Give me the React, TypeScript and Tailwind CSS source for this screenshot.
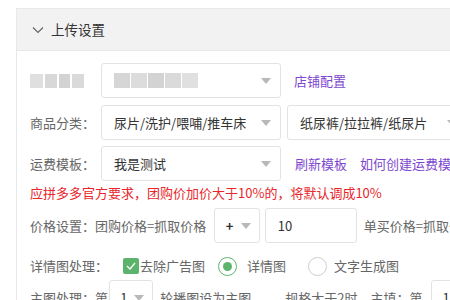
import React from "react";

const font = { fontFamily: '"Noto Sans CJK SC", "Noto Sans", sans-serif' };

const Arrow = () => (
  <svg width="10" height="6" viewBox="0 0 10 6" className="shrink-0">
    <path d="M0 0 L10 0 L5 6 Z" fill="#b8b8b8" />
  </svg>
);

const Select = ({ w, children }: { w: string; children?: React.ReactNode }) => (
  <div
    className={`${w} h-[35px] shrink-0 border border-[#e3e3e3] rounded-[3px] flex items-center justify-between pl-[12px] pr-[9px] text-[#333]`}
  >
    <div className="flex items-center">{children}</div>
    <Arrow />
  </div>
);

const App = () => {
  return (
    <div className="w-[450px] h-[300px] bg-white overflow-hidden text-[13px] whitespace-nowrap" style={font}>
      <div className="ml-[16px] mt-[8px] w-[460px] border border-[#e8e8e8]">
        <div className="h-[42px] bg-[#f2f2f2] border-b border-[#e8e8e8] flex items-center pl-[15px] text-[13.5px] text-[#333]">
          <svg width="12" height="8" viewBox="0 0 12 8" className="mr-[7px]">
            <path d="M1 1.5 L6 6.5 L11 1.5" stroke="#666" strokeWidth="1.2" fill="none" />
          </svg>
          上传设置
        </div>

        <div className="pl-[13px] pt-[12px] text-[#666]">
          <div className="flex items-center h-[35px]">
            <div className="w-[71px] flex items-center">
              <div className="w-[54px] h-[14px] flex gap-[2px] opacity-80">
                <div className="w-[14px] bg-[#d8d8d8]" />
                <div className="w-[12px] bg-[#cfcfcf]" />
                <div className="w-[12px] bg-[#c9c9c9]" />
                <div className="w-[12px] bg-[#d2d2d2]" />
              </div>
            </div>
            <Select w="w-[180px]">
              <div className="w-[84px] h-[15px] flex gap-[1px]">
                <div className="flex-1 bg-[#d6d6d6]" />
                <div className="flex-1 bg-[#dcdcdc]" />
                <div className="flex-1 bg-[#d3d3d3]" />
                <div className="flex-1 bg-[#dadada]" />
                <div className="flex-1 bg-[#e0e0e0]" />
              </div>
            </Select>
            <span className="ml-[13px] text-[#7d47cf]">店铺配置</span>
          </div>

          <div className="flex items-center h-[35px] mt-[7px]">
            <span className="w-[71px]">商品分类：</span>
            <Select w="w-[180px]">尿片/洗护/喂哺/推车床</Select>
            <div className="ml-[6px]">
              <Select w="w-[180px]">纸尿裤/拉拉裤/纸尿片</Select>
            </div>
          </div>

          <div className="flex items-center h-[35px] mt-[6px]">
            <span className="w-[71px]">运费模板：</span>
            <Select w="w-[180px]">我是测试</Select>
            <span className="ml-[14px] text-[#7d47cf]">刷新模板</span>
            <span className="ml-[13px] text-[#7d47cf]">如何创建运费模板</span>
          </div>

          <div className="mt-[2px] h-[20px] flex items-center text-[#e8262c]">
            应拼多多官方要求，团购价加价大于10%的，将默认调成10%
          </div>

          <div className="flex items-center h-[35px] mt-[5px]">
            <span className="w-[184px]">价格设置：团购价格=抓取价格</span>
            <div className="w-[46px] h-[35px] border border-[#e3e3e3] rounded-[3px] flex items-center justify-between pl-[11px] pr-[8px] text-[#333] font-bold">
              +
              <Arrow />
            </div>
            <div className="ml-[5px] w-[92px] h-[35px] border border-[#e3e3e3] rounded-[3px] flex items-center pl-[12px] text-[#333]">
              10
            </div>
            <span className="ml-[7px]">单买价格=抓取价格</span>
          </div>

          <div className="flex items-center h-[20px] mt-[13px]">
            <span className="w-[93px]">详情图处理：</span>
            <div className="w-[16px] h-[16px] rounded-[2px] bg-[#5cb46c] flex items-center justify-center">
              <svg width="10" height="8" viewBox="0 0 10 8">
                <path d="M1 4 L4 7 L9 1" stroke="#fff" strokeWidth="1.2" fill="none" />
              </svg>
            </div>
            <span className="ml-[1px]">去除广告图</span>
            <div className="ml-[13px] w-[19px] h-[19px] rounded-full border border-[#5cb46c] flex items-center justify-center">
              <div className="w-[9px] h-[9px] rounded-full bg-[#5cb46c]" />
            </div>
            <span className="ml-[10px]">详情图</span>
            <div className="ml-[22px] w-[19px] h-[19px] rounded-full border border-[#cfcfcf]" />
            <span className="ml-[7px]">文字生成图</span>
          </div>

          <div className="flex items-center h-[35px] mt-[4px]">
            <span className="w-[83px]">主图处理：第</span>
            <div className="w-[45px] h-[35px] border border-[#e3e3e3] rounded-[3px] flex items-center justify-between pl-[10px] pr-[8px] text-[#333]">
              1
              <Arrow />
            </div>
            <span className="ml-[7px]">轮播图设为主图</span>
            <span className="ml-[34px]">规格大于2时，主填：第</span>
            <div className="ml-[9px] w-[45px] h-[35px] border border-[#e3e3e3] rounded-[3px] flex items-center pl-[10px] text-[#333]">
              1
            </div>
          </div>
        </div>
      </div>
    </div>
  );
};

export default App;
